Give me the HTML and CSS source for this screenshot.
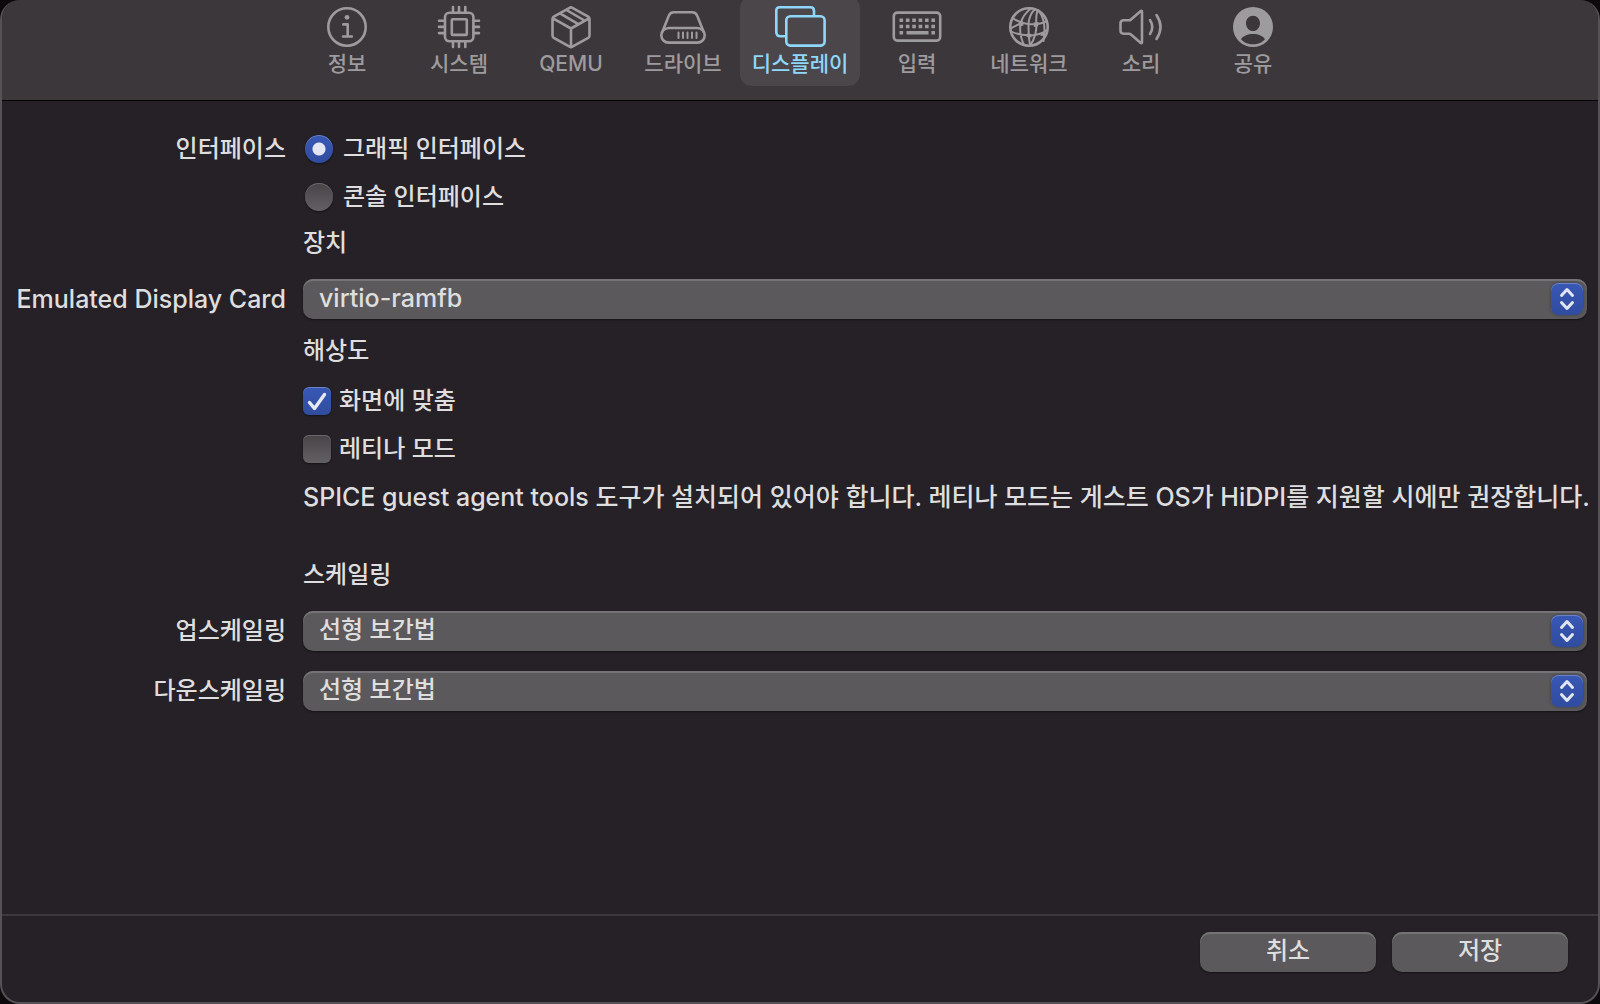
FILE: index.html
```html
<!DOCTYPE html>
<html lang="ko">
<head>
<meta charset="utf-8">
<meta name="viewport" content="width=device-width, initial-scale=1">
<title>디스플레이</title>
<link rel="stylesheet" href="styles.css">
</head>
<body>
<div class="window">
  <header class="toolbar">
    <nav class="tabs">
      <button type="button" class="tab">
        <svg class="icon" viewBox="0 0 52 44"><circle cx="26" cy="22" r="18.7"/><circle class="solid" cx="26" cy="12.3" r="2.4"/><path d="M22.3 19.4h4.4v12M22 31.5h8.8"/></svg>
        <span>정보</span>
      </button>
      <button type="button" class="tab">
        <svg class="icon" viewBox="0 0 52 44"><rect x="12" y="7.7" width="28.4" height="28.6" rx="4.5"/><rect x="18.8" y="14.3" width="15" height="15.6" rx="1"/><path d="M20 2v5M26 2v5M32.3 2v5M20 37v5M26 37v5M32.3 37v5M6 15.7h5M6 21.9h5M6 28.1h5M41 15.7h5M41 21.9h5M41 28.1h5"/></svg>
        <span>시스템</span>
      </button>
      <button type="button" class="tab">
        <svg class="icon" viewBox="0 0 52 44"><path d="M24.6 2.8q1.4-.8 2.8 0l15.800 8.900q1.300.8 1.300 2.300v16.500q0 1.500-1.300 2.300l-15.800 8.900q-1.400.8-2.800 0l-15.800-8.900q-1.300-.8-1.300-2.300v-16.500q0-1.500 1.300-2.300zM8 13.300l18 10.200 18-10.200M26 23.500v18.500M15 8.400l17.500 10.300M21.500 5l17 10"/></svg>
        <span>QEMU</span>
      </button>
      <button type="button" class="tab">
        <svg class="icon" viewBox="0 0 52 44"><path d="M5.500 26.500l6.300-15.800q1.300-3.500 5-3.500h18.400q3.700 0 5 3.500l6.300 15.800"/><rect x="4.300" y="23" width="43.400" height="14.600" rx="7.300"/><path class="thin" d="M21.500 27.500v5.500M26 27.500v5.500M30.500 27.500v5.500M35 27.500v5.500M39.500 27.500v5.500"/></svg>
        <span>드라이브</span>
      </button>
      <button type="button" class="tab tab-active" aria-current="page">
        <svg class="icon" viewBox="0 0 52 44"><path d="M10.500 31.300h-4q-4.200 0-4.200-4.200v-21.700q0-3.100 3.600-3.100h30.500q3.600 0 3.600 3.600v4"/><rect x="12.300" y="11.300" width="38.300" height="29.300" rx="4"/></svg>
        <span>디스플레이</span>
      </button>
      <button type="button" class="tab">
        <svg class="icon" viewBox="0 0 52 44"><rect x="2.800" y="7.600" width="46.400" height="28" rx="3.500"/><path class="keys" d="M8.500 15.300h35.500M8.500 21.500h35.500" stroke-dasharray="3.600 2.780"/><path class="keys" d="M8.500 27.800h3.600M15.500 27.800h22M40.400 27.800h3.600"/></svg>
        <span>입력</span>
      </button>
      <button type="button" class="tab">
        <svg class="icon" viewBox="0 0 52 44"><circle cx="26" cy="22" r="18.700"/><path class="thin" d="M28 3.500q-8 6-10.300 14.800-2 11 3.300 21.700M32 4q-6 6-6.500 15 0 13 1.500 21M34.500 5q-2 8-1 14 0 12-6 21M35 5q9 10 5.500 31M9.500 13q8 5.500 17 6.200 10 .8 17.500-3.200M7.500 26q8 4.500 18.800 4.300 11 0 17.500-5M17.700 18.300l-10 5"/><path class="solid" d="M15.500 17.500l4.500-1.500.5 4.500-4 1zM30.500 17.500l5-.5-.5 4.500-4 .5zM24 28.500l4.500.5v3.500l-5-.5zM38 27.500l4-1.500-.5 4.500-4 .5z"/></svg>
        <span>네트워크</span>
      </button>
      <button type="button" class="tab">
        <svg class="icon" viewBox="0 0 52 44"><path d="M8.500 15.300h5.500q1.200 0 2-.8l9.500-8.300q1.500-1.200 1.500.8v30q0 2-1.500.8l-9.500-8.300q-.8-.8-2-.8h-5.500q-3 0-3-3v-7.400q0-3 3-3zM35 15q4.500 7 0 14M41.500 10q8 12 0 24"/></svg>
        <span>소리</span>
      </button>
      <button type="button" class="tab">
        <svg class="icon" viewBox="0 0 52 44"><path class="solid" fill-rule="evenodd" d="M26 2a20 20 0 1 1 0 40a20 20 0 1 1 0-40zM26 10.800c-4 0-7 3.200-7 7.400s3 7.800 7 7.800 7-3.600 7-7.800-3-7.400-7-7.400zM26 29c-5.500 0-10 2-12 5.300 2.500 3 7 5 12 5s9.500-2 12-5c-2-3.300-6.500-5.300-12-5.300z"/></svg>
        <span>공유</span>
      </button>
    </nav>
  </header>

  <main class="settings">
    <div class="row" role="radiogroup" aria-labelledby="interface-label">
      <span class="row-label" id="interface-label">인터페이스</span>
      <label class="choice choice-radio"><input type="radio" name="interface" checked>그래픽 인터페이스</label>
    </div>
    <div class="row">
      <label class="choice choice-radio"><input type="radio" name="interface">콘솔 인터페이스</label>
    </div>
    <h2 class="heading">장치</h2>
    <div class="row">
      <label class="row-label latin" for="card">Emulated Display Card</label>
      <div class="popup">
        <select id="card" class="latin"><option>virtio-ramfb</option></select>
        <svg class="popup-arrows" viewBox="0 0 32 32"><path d="M10.500 12.500l5.500-6 5.500 6M10.500 19.500l5.500 6 5.500-6"/></svg>
      </div>
    </div>
    <h2 class="heading">해상도</h2>
    <div class="row">
      <label class="choice"><input type="checkbox" checked>화면에 맞춤</label>
    </div>
    <div class="row">
      <label class="choice"><input type="checkbox">레티나 모드</label>
    </div>
    <p class="note">SPICE guest agent tools 도구가 설치되어 있어야 합니다. 레티나 모드는 게스트 OS가 HiDPI를 지원할 시에만 권장합니다.</p>
    <h2 class="heading">스케일링</h2>
    <div class="row">
      <label class="row-label" for="upscaling">업스케일링</label>
      <div class="popup">
        <select id="upscaling"><option>선형 보간법</option></select>
        <svg class="popup-arrows" viewBox="0 0 32 32"><path d="M10.500 12.500l5.500-6 5.500 6M10.500 19.500l5.500 6 5.500-6"/></svg>
      </div>
    </div>
    <div class="row">
      <label class="row-label" for="downscaling">다운스케일링</label>
      <div class="popup">
        <select id="downscaling"><option>선형 보간법</option></select>
        <svg class="popup-arrows" viewBox="0 0 32 32"><path d="M10.500 12.500l5.500-6 5.500 6M10.500 19.500l5.500 6 5.500-6"/></svg>
      </div>
    </div>
  </main>

  <footer class="actions">
    <button type="button" class="action">취소</button>
    <button type="button" class="action">저장</button>
  </footer>
</div>
</body>
</html>
```
FILE: styles.css
```css
* {
  box-sizing: border-box;
}

body {
  margin: 0;
  background: #0c0a0c;
  color: #dfdedf;
  font: 500 24px/28px Inter, "Noto Sans CJK KR", sans-serif;
}

button,
select,
input {
  margin: 0;
  font: inherit;
  color: inherit;
}

.window {
  display: flex;
  flex-direction: column;
  min-height: 100vh;
  overflow: hidden;
  border: 2px solid #555155;
  border-top: 0;
  border-radius: 20px;
  background: #262127;
}

.toolbar {
  height: 101px;
  border-bottom: 1px solid #000;
  background: #3c373b;
}

.tabs {
  display: flex;
  justify-content: center;
  gap: 2px;
  margin-top: -4px;
}

.tab {
  display: flex;
  flex-direction: column;
  gap: 1px;
  align-items: center;
  width: 110px;
  height: 90px;
  padding: 9px 0 0;
  border: 0;
  border-radius: 12px;
  background: none;
  color: #9e9b9e;
  font-size: 21px;
  white-space: nowrap;
}

.tab-active {
  width: 120px;
  background: #4a464a;
  color: #8fd8fc;
}

.icon {
  width: 52px;
  height: 44px;
  fill: none;
  stroke: currentColor;
  stroke-width: 2.6;
  stroke-linecap: round;
  stroke-linejoin: round;
}

.icon .solid {
  fill: currentColor;
  stroke: none;
}

.icon .thin {
  stroke-width: 2;
}

.icon .keys {
  stroke-width: 3.6;
  stroke-linecap: butt;
}

.settings {
  display: flex;
  flex: 1;
  flex-direction: column;
  gap: 20px;
  padding: 34px 11px 20px 12px;
}

.row {
  display: grid;
  grid-template-columns: 272px 1fr;
  column-gap: 17px;
  align-items: center;
}

.row-label {
  text-align: right;
  white-space: nowrap;
}

.heading,
.note {
  margin: 0 0 0 289px;
  font-size: 24px;
  font-weight: 500;
}

.heading {
  margin-top: -2px;
  margin-bottom: 2px;
}

.note {
  margin-bottom: 32px;
  font-size: 25px;
  white-space: nowrap;
}

.latin {
  font-size: 25px;
}

.choice {
  display: flex;
  grid-column: 2;
  gap: 8px;
  align-items: center;
}

.choice-radio {
  gap: 10px;
  padding-left: 2px;
}

.choice input {
  width: 28px;
  height: 28px;
  appearance: none;
  border-radius: 6px;
  background: linear-gradient(#484347, #636063);
  box-shadow: inset 0 1px #6a666a, 0 1px 2px #151216;
}

.choice input[type="radio"] {
  border-radius: 50%;
}

.choice input:checked {
  background: linear-gradient(#3858b6, #304c9e);
  box-shadow: inset 0 1px #6c83c6, 0 1px 2px #151216;
}

.choice input[type="radio"]:checked {
  background: radial-gradient(circle, #e2e5f2 0 6px, transparent 7px), linear-gradient(#3858b6, #304c9e);
}

.choice input[type="checkbox"]:checked {
  background: url("data:image/svg+xml,%3Csvg xmlns='http://www.w3.org/2000/svg' viewBox='0 0 28 28'%3E%3Cpath d='M6.500 15.500l5 6 10-14' fill='none' stroke='%23e6e9f5' stroke-width='3.400' stroke-linecap='round' stroke-linejoin='round'/%3E%3C/svg%3E"), linear-gradient(#3858b6, #304c9e);
}

.popup {
  position: relative;
}

.popup select {
  display: block;
  width: 100%;
  height: 40px;
  padding: 0 44px 2px 16px;
  appearance: none;
  border: 0;
  border-radius: 10px;
  background: #5b595b;
  box-shadow: inset 0 2px #767376, 0 1px 2px #151216;
}

.popup-arrows {
  position: absolute;
  top: 4px;
  right: 4px;
  width: 32px;
  height: 32px;
  border-radius: 8px;
  background: linear-gradient(#3858b6, #304c9e);
  box-shadow: inset 0 1px #6c83c6, 0 0 3px #353b50;
  fill: none;
  stroke: #e2e5f2;
  stroke-width: 3;
  stroke-linecap: round;
  stroke-linejoin: round;
  pointer-events: none;
}

.actions {
  display: flex;
  justify-content: flex-end;
  gap: 16px;
  padding: 16px 30px 30px;
  border-top: 2px solid #3d383d;
}

.action {
  width: 176px;
  height: 40px;
  padding: 0 0 2px;
  border: 0;
  border-radius: 10px;
  background: #5b595b;
  box-shadow: inset 0 2px #767376, 0 1px 2px #151216;
}
```
